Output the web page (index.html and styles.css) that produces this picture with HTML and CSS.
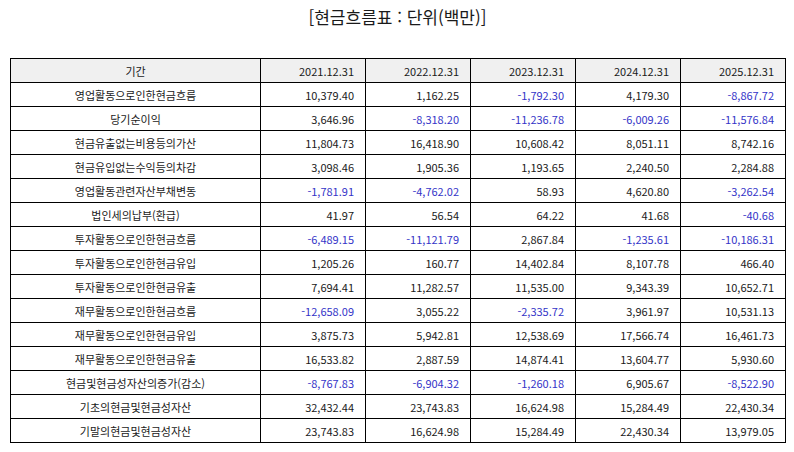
FILE: index.html
```html
<!DOCTYPE html>
<html lang="ko">
<head>
<meta charset="utf-8">
<title>현금흐름표</title>
<link rel="stylesheet" href="styles.css">
</head>
<body>
<div class="page">
  <h1 class="title">[현금흐름표 : 단위(백만)]</h1>
  <table class="cf">
    <colgroup>
      <col class="c-label"><col class="c-num"><col class="c-num"><col class="c-num"><col class="c-num"><col class="c-num">
    </colgroup>
    <thead>
      <tr><th class="lbl">기간</th><th>2021.12.31</th><th>2022.12.31</th><th>2023.12.31</th><th>2024.12.31</th><th>2025.12.31</th></tr>
    </thead>
    <tbody>
      <tr><td class="lbl">영업활동으로인한현금흐름</td><td>10,379.40</td><td>1,162.25</td><td class="neg">-1,792.30</td><td>4,179.30</td><td class="neg">-8,867.72</td></tr>
      <tr><td class="lbl">당기순이익</td><td>3,646.96</td><td class="neg">-8,318.20</td><td class="neg">-11,236.78</td><td class="neg">-6,009.26</td><td class="neg">-11,576.84</td></tr>
      <tr><td class="lbl">현금유출없는비용등의가산</td><td>11,804.73</td><td>16,418.90</td><td>10,608.42</td><td>8,051.11</td><td>8,742.16</td></tr>
      <tr><td class="lbl">현금유입없는수익등의차감</td><td>3,098.46</td><td>1,905.36</td><td>1,193.65</td><td>2,240.50</td><td>2,284.88</td></tr>
      <tr><td class="lbl">영업활동관련자산부채변동</td><td class="neg">-1,781.91</td><td class="neg">-4,762.02</td><td>58.93</td><td>4,620.80</td><td class="neg">-3,262.54</td></tr>
      <tr><td class="lbl">법인세의납부(환급)</td><td>41.97</td><td>56.54</td><td>64.22</td><td>41.68</td><td class="neg">-40.68</td></tr>
      <tr><td class="lbl">투자활동으로인한현금흐름</td><td class="neg">-6,489.15</td><td class="neg">-11,121.79</td><td>2,867.84</td><td class="neg">-1,235.61</td><td class="neg">-10,186.31</td></tr>
      <tr><td class="lbl">투자활동으로인한현금유입</td><td>1,205.26</td><td>160.77</td><td>14,402.84</td><td>8,107.78</td><td>466.40</td></tr>
      <tr><td class="lbl">투자활동으로인한현금유출</td><td>7,694.41</td><td>11,282.57</td><td>11,535.00</td><td>9,343.39</td><td>10,652.71</td></tr>
      <tr><td class="lbl">재무활동으로인한현금흐름</td><td class="neg">-12,658.09</td><td>3,055.22</td><td class="neg">-2,335.72</td><td>3,961.97</td><td>10,531.13</td></tr>
      <tr><td class="lbl">재무활동으로인한현금유입</td><td>3,875.73</td><td>5,942.81</td><td>12,538.69</td><td>17,566.74</td><td>16,461.73</td></tr>
      <tr><td class="lbl">재무활동으로인한현금유출</td><td>16,533.82</td><td>2,887.59</td><td>14,874.41</td><td>13,604.77</td><td>5,930.60</td></tr>
      <tr><td class="lbl">현금및현금성자산의증가(감소)</td><td class="neg">-8,767.83</td><td class="neg">-6,904.32</td><td class="neg">-1,260.18</td><td>6,905.67</td><td class="neg">-8,522.90</td></tr>
      <tr><td class="lbl">기초의현금및현금성자산</td><td>32,432.44</td><td>23,743.83</td><td>16,624.98</td><td>15,284.49</td><td>22,430.34</td></tr>
      <tr><td class="lbl">기말의현금및현금성자산</td><td>23,743.83</td><td>16,624.98</td><td>15,284.49</td><td>22,430.34</td><td>13,979.05</td></tr>
    </tbody>
  </table>
</div>
</body>
</html>
```
FILE: styles.css
```css
html, body {
  margin: 0;
  padding: 0;
  background: #ffffff;
}
body {
  font-family: "Noto Sans CJK KR", "Noto Sans", sans-serif;
  color: #1a1a1a;
}
.page {
  width: 794px;
  padding: 0 9px 0 10px;
  box-sizing: border-box;
}
.title {
  margin: 0;
  height: 58px;
  padding-top: 6px;
  box-sizing: border-box;
  text-align: center;
  font-size: 17px;
  font-weight: 400;
  line-height: 22px;
  color: #1a1a1a;
}
.cf {
  width: 775px;
  border-collapse: collapse;
  table-layout: fixed;
  font-size: 11px;
}
.c-label { width: 250px; }
.c-num { width: 105px; }
.cf th, .cf td {
  border: 1px solid #000000;
  height: 24px;
  padding: 0 11px 0 6px;
  box-sizing: border-box;
  text-align: right;
  font-weight: 400;
  line-height: 16px;
  color: #1a1a1a;
  white-space: nowrap;
}
.cf th {
  background: #f0f0f0;
}
.cf .lbl {
  text-align: center;
  padding: 0 6px;
}
.cf .neg {
  color: #3434c8;
}
```
